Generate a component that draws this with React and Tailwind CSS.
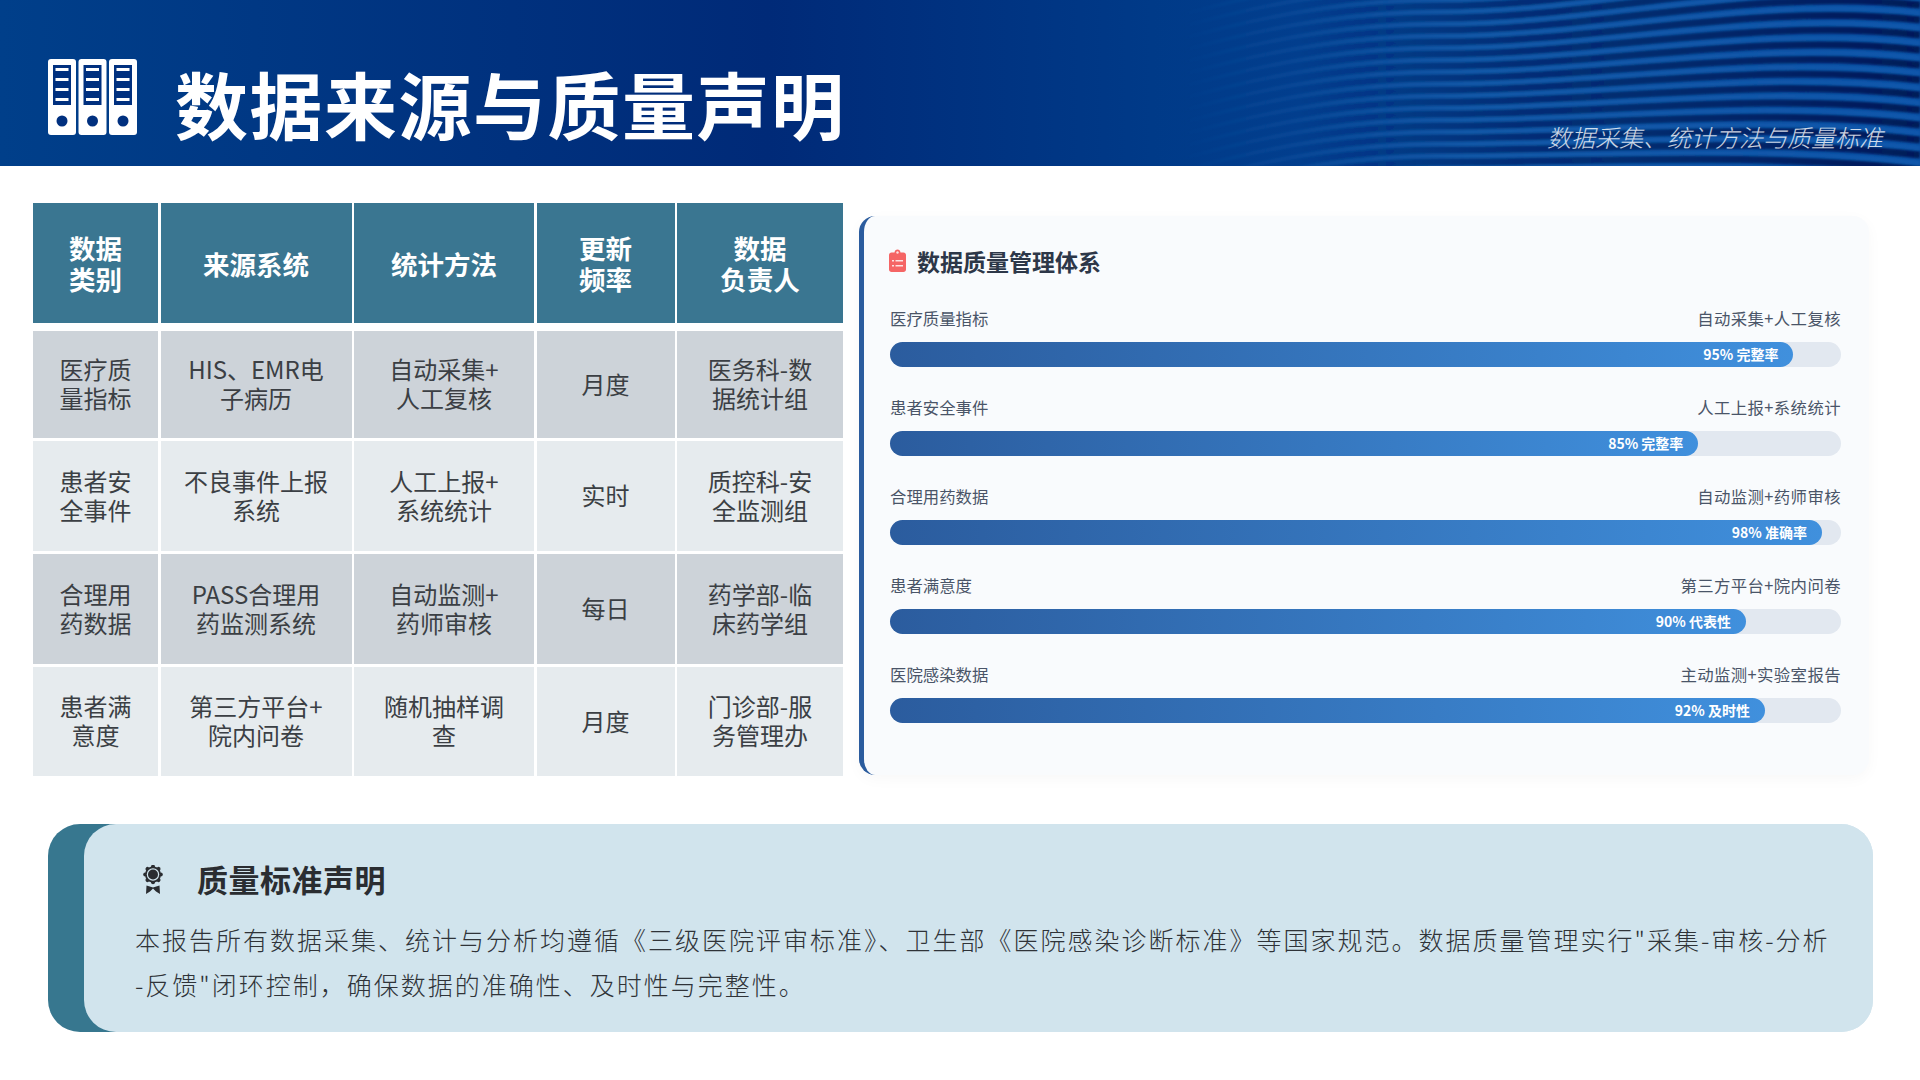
const gridCols = 'grid grid-cols-[125px_191px_180px_138px_166px] gap-x-[2.5px]';

const headers = ['数据\n类别', '来源系统', '统计方法', '更新\n频率', '数据\n负责人'];

const rows = [
  { h: 'h-[107px]', bg: 'bg-[#cdd3d9]', cells: ['医疗质\n量指标', 'HIS、EMR电\n子病历', '自动采集+\n人工复核', '月度', '医务科-数\n据统计组'] },
  { h: 'h-[110px]', bg: 'bg-[#e6ebee]', cells: ['患者安\n全事件', '不良事件上报\n系统', '人工上报+\n系统统计', '实时', '质控科-安\n全监测组'] },
  { h: 'h-[110px]', bg: 'bg-[#cdd3d9]', cells: ['合理用\n药数据', 'PASS合理用\n药监测系统', '自动监测+\n药师审核', '每日', '药学部-临\n床药学组'] },
  { h: 'h-[109px]', bg: 'bg-[#e6ebee]', cells: ['患者满\n意度', '第三方平台+\n院内问卷', '随机抽样调\n查', '月度', '门诊部-服\n务管理办'] },
];

const bars = [
  { name: '医疗质量指标', method: '自动采集+人工复核', pct: 95, label: '95% 完整率' },
  { name: '患者安全事件', method: '人工上报+系统统计', pct: 85, label: '85% 完整率' },
  { name: '合理用药数据', method: '自动监测+药师审核', pct: 98, label: '98% 准确率' },
  { name: '患者满意度', method: '第三方平台+院内问卷', pct: 90, label: '90% 代表性' },
  { name: '医院感染数据', method: '主动监测+实验室报告', pct: 92, label: '92% 及时性' },
];

const waveLines = Array.from({ length: 32 }, (_, i) => i);

const BinderIcon = () => (
  <svg width="89" height="76" viewBox="0 0 89 76" className="shrink-0">
    {[0, 30.5, 61].map((x) => (
      <g key={x}>
        <rect x={x} y="0" width="28" height="76" rx="3" fill="#ffffff" />
        <rect x={x + 5} y="6" width="18" height="40" fill="#00307f" />
        {[9, 19, 29, 39].map((y) => (
          <rect key={y} x={x + 7.5} y={y} width="13" height="3" fill="#ffffff" />
        ))}
        <circle cx={x + 14} cy="62" r="5.5" fill="#00307f" />
      </g>
    ))}
  </svg>
);

const RosetteIcon = () => (
  <svg width="20" height="29" viewBox="0 0 20 29" className="shrink-0">
    <circle cx="10" cy="9.5" r="8" fill="#2a2c30" />
    {[0, 45, 90, 135, 180, 225, 270, 315].map((deg) => (
      <circle key={deg} cx="10" cy="1.7" r="2" fill="#2a2c30" transform={`rotate(${deg} 10 9.5)`} />
    ))}
    <circle cx="10" cy="9.5" r="6.2" fill="#d1e4ed" />
    <circle cx="10" cy="9.5" r="5" fill="#2a2c30" />
    <path d="M3.5 20.5L10 22.5L16.5 20.5L17 29L13 26.5L10 23.5L7 26.5L3 29Z" fill="#2a2c30" />
  </svg>
);

const ClipboardIcon = () => (
  <svg width="17" height="23" viewBox="0 0 17 23" className="shrink-0 -ml-[1px] -mt-[2px]">
    <path d="M2.5 3.5H5.5C5.7 1.6 6.9 0.5 8.5 0.5C10.1 0.5 11.3 1.6 11.5 3.5H14.5C15.9 3.5 17 4.6 17 6V20.5C17 21.9 15.9 23 14.5 23H2.5C1.1 23 0 21.9 0 20.5V6C0 4.6 1.1 3.5 2.5 3.5Z" fill="#f56565" />
    <circle cx="8.5" cy="3.5" r="1.2" fill="#fde2e2" />
    <rect x="6.5" y="11" width="7.5" height="1.5" fill="#fde2e2" />
    <rect x="6.5" y="16" width="7.5" height="1.5" fill="#fde2e2" />
    <rect x="3" y="11" width="2" height="1.5" fill="#fde2e2" />
    <rect x="3" y="16" width="2" height="1.5" fill="#fde2e2" />
  </svg>
);

// ripple lines on the right half of the banner: crest near x=1430, dropping to the right
const Waves = () => (
  <svg className="absolute inset-0" width="1920" height="166" viewBox="0 0 1920 166">
    <defs>
      <linearGradient id="waveDark" gradientUnits="userSpaceOnUse" x1="1300" y1="0" x2="1920" y2="0">
        <stop offset="0" stopColor="#001a58" stopOpacity="0" />
        <stop offset="0.35" stopColor="#001a58" stopOpacity="0.5" />
        <stop offset="1" stopColor="#001a58" stopOpacity="1" />
      </linearGradient>
      <linearGradient id="waveLight" gradientUnits="userSpaceOnUse" x1="1180" y1="0" x2="1920" y2="0">
        <stop offset="0" stopColor="#2a7cc8" stopOpacity="0" />
        <stop offset="0.4" stopColor="#2a7cc8" stopOpacity="0.4" />
        <stop offset="1" stopColor="#2a7cc8" stopOpacity="0.2" />
      </linearGradient>
      <filter id="waveBlur">
        <feGaussianBlur stdDeviation="0.9" />
      </filter>
    </defs>
    <g fill="none" filter="url(#waveBlur)">
      {waveLines.map((i) => {
        const mid = -30 + i * 12;
        const right = -70 + i * 15;
        const left = mid + 42;
        return (
          <g key={i}>
            <path d={`M1170 ${left}C1290 ${mid + 8} 1370 ${mid} 1440 ${mid}C1600 ${mid} 1760 ${right - 18} 1920 ${right}`} stroke="url(#waveDark)" strokeWidth="7" />
            <path d={`M1170 ${left + 6}C1290 ${mid + 14} 1370 ${mid + 6} 1440 ${mid + 6}C1600 ${mid + 6} 1760 ${right - 10} 1920 ${right + 8}`} stroke="url(#waveLight)" strokeWidth="4" />
          </g>
        );
      })}
    </g>
  </svg>
);

const App = () => {
  return (
    <div className="w-[1920px] h-[1080px] overflow-hidden bg-white font-['Noto_Sans_CJK_SC','Noto_Sans',sans-serif]">
      {/* Banner */}
      <header className="relative h-[166px] overflow-hidden bg-[linear-gradient(90deg,#003f8a_0%,#002a78_40%,#003a88_60%,#0a4fa5_100%)]">
        <Waves />
        <div className="relative flex h-full items-start justify-between pl-[48px] pr-[37px]">
          <div className="flex items-start gap-[38px] pt-[59px]">
            <BinderIcon />
            <h1 className="-mt-[5px] text-[73px] leading-[96px] font-bold tracking-[1.5px] text-white whitespace-nowrap">数据来源与质量声明</h1>
          </div>
          <p className="mt-[120px] text-[24px] leading-[34px] italic font-light text-white/80 whitespace-nowrap">数据采集、统计方法与质量标准</p>
        </div>
      </header>

      {/* Table and quality bars */}
      <section className="flex items-start gap-[16px] pl-[33px] pt-[37px]">
        <div className="w-[810px] flex flex-col gap-[3px]">
          <div className={`${gridCols} mb-[5px]`}>
            {headers.map((text) => (
              <div key={text} className="h-[120px] flex items-center justify-center bg-[#3a7691] text-center text-[26.5px] leading-[31px] font-bold text-white whitespace-pre-line">
                {text}
              </div>
            ))}
          </div>
          {rows.map((row) => (
            <div key={row.cells[0]} className={gridCols}>
              {row.cells.map((text, i) => (
                <div key={i} className={`${row.h} ${row.bg} flex items-center justify-center pb-[3px] text-center text-[24px] leading-[29px] text-[#3b3f44] whitespace-pre-line`}>
                  {text}
                </div>
              ))}
            </div>
          ))}
        </div>

        <div className="mt-[13px] w-[1010px] h-[559px] rounded-[16px] border-l-[5px] border-[#2b5c9e] bg-[#f9fbfd] pl-[26px] pr-[28px] pt-[30px] shadow-[0_4px_15px_rgba(0,0,0,0.03)]">
          <div className="flex items-center gap-[11px] h-[30px] mb-[30px]">
            <ClipboardIcon />
            <h2 className="text-[23px] leading-[30px] font-bold text-[#2d3748]">数据质量管理体系</h2>
          </div>
          <div className="flex flex-col gap-[28px]">
            {bars.map((bar) => (
              <div key={bar.name}>
                <div className="flex justify-between h-[24px] mb-[12px] text-[16.4px] leading-[24px] text-[#4a5568]">
                  <span>{bar.name}</span>
                  <span className="tracking-[0.4px]">{bar.method}</span>
                </div>
                <div className="h-[25px] rounded-full bg-[#e2e8f0]">
                  <div
                    className="h-full rounded-full bg-gradient-to-r from-[#2b5c9e] to-[#4090dd] flex items-center justify-end pr-[15px] text-[14px] font-semibold text-white whitespace-nowrap"
                    style={{ width: `${bar.pct}%` }}
                  >
                    {bar.label}
                  </div>
                </div>
              </div>
            ))}
          </div>
        </div>
      </section>

      {/* Statement */}
      <section className="mt-[48px] ml-[48px] w-[1825px] h-[208px] rounded-[32px] bg-gradient-to-r from-[#37778f] from-[68px] to-[#d1e4ed] to-[68px] pl-[36px]">
        <div className="h-full rounded-[32px] bg-[#d1e4ed] pl-[51px] pr-[40px] pt-[35px]">
          <div className="flex items-center h-[40px] mb-[18px]">
            <div className="ml-[8px]">
              <RosetteIcon />
            </div>
            <h3 className="ml-[34px] text-[31px] leading-[40px] font-bold tracking-[0.5px] text-[#2a2d31]">质量标准声明</h3>
          </div>
          <p className="text-[25px] leading-[45px] font-light tracking-[2px] text-[#2f3338] whitespace-nowrap">
            本报告所有数据采集、统计与分析均遵循《三级医院评审标准》、卫生部《医院感染诊断标准》等国家规范。数据质量管理实行"采集-审核-分析
            <br />
            -反馈"闭环控制，确保数据的准确性、及时性与完整性。
          </p>
        </div>
      </section>
    </div>
  );
};

export default App;
